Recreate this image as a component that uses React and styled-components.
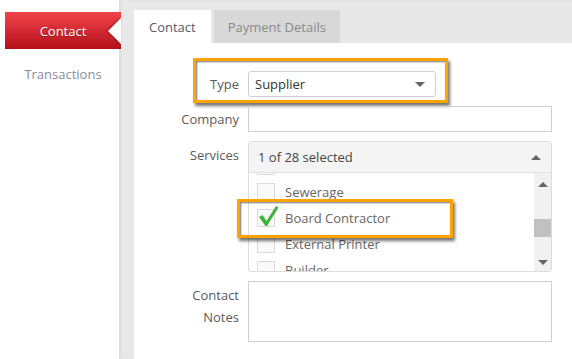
import React from 'react';
import styled, { createGlobalStyle } from 'styled-components';

const GlobalStyle = createGlobalStyle`
    body {
        margin: 0;
        font-family: 'Open Sans', 'Noto Sans', sans-serif;
        background: #fff;
    }
`

const Page = styled.div`
    display: flex;
    width: 572px;
    height: 359px;
    overflow: hidden;
`

const Sidebar = styled.div`
    width: 119px;
    flex-shrink: 0;
    padding-top: 12px;
    display: flex;
    flex-direction: column;
    position: relative;
    z-index: 1;
`

const NavActive = styled.div`
    margin-left: 5px;
    width: 116px;
    height: 37px;
    background: linear-gradient(#f2434b, #b3111a);
    color: #fff;
    font-size: 13px;
    display: flex;
    align-items: center;
    justify-content: center;
    box-sizing: border-box;
    position: relative;
    text-shadow: 0 1px 1px rgba(0, 0, 0, 0.3);

    &::after {
        content: '';
        position: absolute;
        right: 0;
        top: 6px;
        border-top: 13px solid transparent;
        border-bottom: 13px solid transparent;
        border-right: 13px solid #fff;
        filter: drop-shadow(-1px 0 1px rgba(0, 0, 0, 0.35));
    }
`

const NavItem = styled.div`
    margin-top: 16px;
    color: #8a8c99;
    font-size: 13px;
    text-align: center;
    padding-left: 7px;
`

const Main = styled.div`
    flex: 1;
    background: #e8e8e8;
    padding-left: 15px;
    display: flex;
    flex-direction: column;
    box-shadow: inset 2px 0 2px rgba(0, 0, 0, 0.06);
`

const Tabs = styled.div`
    display: flex;
    gap: 3px;
    padding-top: 10px;
`

const Tab = styled.div`
    height: 33px;
    padding: 0 ${p => p.active ? 15 : 14}px;
    display: flex;
    align-items: center;
    font-size: 13px;
    background: ${p => p.active ? '#fff' : '#d8d8d8'};
    color: ${p => p.active ? '#555a66' : '#8a8a8a'};
`

const Panel = styled.div`
    flex: 1;
    background: #fff;
    padding-top: 28px;
    display: flex;
    flex-direction: column;
    gap: 9px;
`

const Row = styled.div`
    display: flex;
    gap: 9px;
    position: relative;
    align-items: ${p => p.top ? 'flex-start' : 'center'};
`

const Label = styled.div`
    width: 105px;
    text-align: right;
    font-size: 13px;
    color: #5a5a5a;
    line-height: 22px;
    padding-top: ${p => p.pad || 0}px;
`

const Select = styled.div`
    width: 188px;
    height: 26px;
    box-sizing: border-box;
    border: 1px solid #cfcfcf;
    border-radius: 3px;
    display: flex;
    align-items: center;
    justify-content: space-between;
    padding: 0 10px 0 6px;
    font-size: 13px;
    color: #333;
`

const Caret = styled.span`
    width: 0;
    height: 0;
    border-left: 5px solid transparent;
    border-right: 5px solid transparent;
    border-${p => p.up ? 'bottom' : 'top'}: 5px solid #666;
`

const Input = styled.div`
    width: 304px;
    height: ${p => p.h || 26}px;
    box-sizing: border-box;
    border: 1px solid #cfcfcf;
`

const Multi = styled.div`
    width: 304px;
    height: 131px;
    box-sizing: border-box;
    border: 1px solid #dcdcdc;
    border-radius: 3px;
    display: flex;
    flex-direction: column;
    overflow: hidden;
`

const MultiHead = styled.div`
    height: 30px;
    flex-shrink: 0;
    background: #f4f4f4;
    border-bottom: 1px solid #e2e2e2;
    display: flex;
    align-items: center;
    justify-content: space-between;
    padding: 0 10px 0 9px;
    font-size: 13px;
    color: #444;
`

const MultiBody = styled.div`
    flex: 1;
    display: flex;
    overflow: hidden;
`

const List = styled.div`
    flex: 1;
    overflow: hidden;
`

const ListInner = styled.div`
    margin-top: -20px;
    display: flex;
    flex-direction: column;
`

const Item = styled.div`
    height: 26px;
    display: flex;
    align-items: center;
    gap: 10px;
    padding-left: 8px;
    font-size: 13px;
    color: #666;
`

const Box = styled.span`
    width: 18px;
    height: 18px;
    box-sizing: border-box;
    border: 1px solid #dadada;
    background: #fafafa;
    position: relative;
`

const Tick = styled.svg`
    position: absolute;
    left: 0;
    top: -5px;
`

const Scrollbar = styled.div`
    width: 17px;
    background: #f1f1f1;
    display: flex;
    flex-direction: column;
    align-items: center;
    justify-content: space-between;
    padding: 9px 0 6px;
    box-sizing: border-box;
    position: relative;
`

const Thumb = styled.div`
    position: absolute;
    left: 0;
    right: 0;
    top: 46px;
    height: 18px;
    background: #c1c1c1;
`

const Highlight = styled.div`
    position: absolute;
    left: ${p => p.x}px;
    top: ${p => p.y}px;
    width: ${p => p.w}px;
    height: ${p => p.h}px;
    box-sizing: border-box;
    border: 3px solid #ffa300;
    box-shadow: 2px 3px 3px rgba(0, 0, 0, 0.55), inset 1px 1px 2px rgba(0, 0, 0, 0.55);
    pointer-events: none;
`

// first row is scrolled out of view, only the bottom of its box shows
const services = [
    { id: 0, name: '', checked: false },
    { id: 1, name: 'Sewerage', checked: false },
    { id: 2, name: 'Board Contractor', checked: true },
    { id: 3, name: 'External Printer', checked: false },
    { id: 4, name: 'Builder', checked: false },
]

function Check() {
    return (
        <Tick width="21" height="22" viewBox="0 0 21 22">
            <path d="M1 12 L4.5 10 L8.5 16 L18 1 L20.5 2.5 L9 21 L7.5 21 Z" fill="#3bb43a" />
        </Tick>
    )
}

export default function App() {
    return (
        <Page>
            <GlobalStyle />
            <Sidebar>
                <NavActive>Contact</NavActive>
                <NavItem>Transactions</NavItem>
            </Sidebar>
            <Main>
                <Tabs>
                    <Tab active>Contact</Tab>
                    <Tab>Payment Details</Tab>
                </Tabs>
                <Panel>
                    <Row>
                        <Label>Type</Label>
                        <Select>
                            Supplier
                            <Caret />
                        </Select>
                        <Highlight x={59} y={-13} w={255} h={45} />
                    </Row>
                    <Row>
                        <Label>Company</Label>
                        <Input />
                    </Row>
                    <Row top>
                        <Label pad={3}>Services</Label>
                        <Multi>
                            <MultiHead>
                                1 of 28 selected
                                <Caret up />
                            </MultiHead>
                            <MultiBody>
                                <List>
                                    <ListInner>
                                        {services.map(s => (
                                            <Item key={s.id}>
                                                <Box>{s.checked && <Check />}</Box>
                                                {s.name}
                                            </Item>
                                        ))}
                                    </ListInner>
                                </List>
                                <Scrollbar>
                                    <Caret up />
                                    <Thumb />
                                    <Caret />
                                </Scrollbar>
                            </MultiBody>
                        </Multi>
                        <Highlight x={103} y={58} w={216} h={39} />
                    </Row>
                    <Row top>
                        <Label pad={3}>Contact<br />Notes</Label>
                        <Input h={61} />
                    </Row>
                </Panel>
            </Main>
        </Page>
    );
}
